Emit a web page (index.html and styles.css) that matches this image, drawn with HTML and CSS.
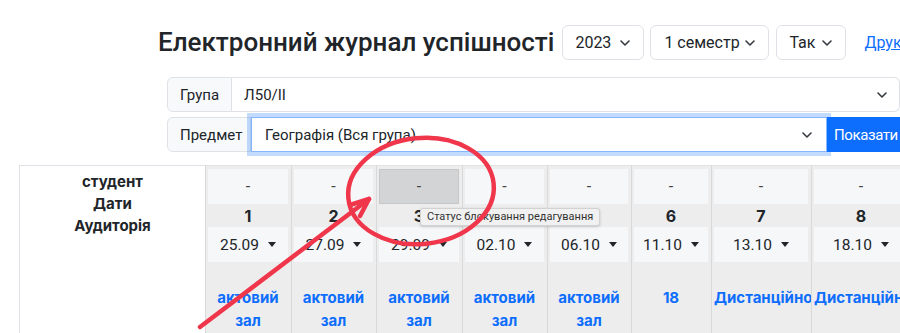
FILE: index.html
```html
<!DOCTYPE html>
<html lang="uk">
<head>
<meta charset="utf-8">
<title>Електронний журнал успішності</title>
<link rel="stylesheet" href="styles.css">
</head>
<body>
<div class="page">
  <header class="topbar">
    <h1 class="title">Електронний журнал успішності</h1>
    <div class="select sel-year"><span>2023</span><svg class="chev" viewBox="0 0 10 6"><path d="M1 1l4 4 4-4"/></svg></div>
    <div class="select sel-sem"><span>1 семестр</span><svg class="chev" viewBox="0 0 10 6"><path d="M1 1l4 4 4-4"/></svg></div>
    <div class="select sel-yes"><span>Так</span><svg class="chev" viewBox="0 0 10 6"><path d="M1 1l4 4 4-4"/></svg></div>
    <a class="print" href="#">Друк</a>
  </header>

  <section class="filters">
    <div class="igroup">
      <span class="ilabel">Група</span>
      <div class="iselect"><span>Л50/II</span><svg class="chev" viewBox="0 0 10 6"><path d="M1 1l4 4 4-4"/></svg></div>
    </div>
    <div class="igroup subject">
      <span class="ilabel">Предмет</span>
      <div class="iselect focus"><span>Географія (Вся група)</span><svg class="chev" viewBox="0 0 10 6"><path d="M1 1l4 4 4-4"/></svg></div>
      <button class="btn">Показати</button>
    </div>
  </section>

  <div class="journal">
    <div class="head-cell">
      <div>студент</div>
      <div>Дати</div>
      <div>Аудиторія</div>
    </div>
    <div class="lesson">
      <div class="status">-</div>
      <div class="num">1</div>
      <div class="date">25.09<span class="caret"></span></div>
      <a class="room" href="#">актовий зал</a>
    </div>
    <div class="lesson">
      <div class="status">-</div>
      <div class="num">2</div>
      <div class="date">27.09<span class="caret"></span></div>
      <a class="room" href="#">актовий зал</a>
    </div>
    <div class="lesson">
      <div class="status locked">-</div>
      <div class="num">3</div>
      <div class="date">29.09<span class="caret"></span></div>
      <a class="room" href="#">актовий зал</a>
    </div>
    <div class="lesson">
      <div class="status">-</div>
      <div class="num">4</div>
      <div class="date">02.10<span class="caret"></span></div>
      <a class="room" href="#">актовий зал</a>
    </div>
    <div class="lesson">
      <div class="status">-</div>
      <div class="num">5</div>
      <div class="date">06.10<span class="caret"></span></div>
      <a class="room" href="#">актовий зал</a>
    </div>
    <div class="lesson">
      <div class="status">-</div>
      <div class="num">6</div>
      <div class="date">11.10<span class="caret"></span></div>
      <a class="room" href="#">18</a>
    </div>
    <div class="lesson">
      <div class="status">-</div>
      <div class="num">7</div>
      <div class="date">13.10<span class="caret"></span></div>
      <a class="room" href="#">Дистанційно</a>
    </div>
    <div class="lesson">
      <div class="status">-</div>
      <div class="num">8</div>
      <div class="date">18.10<span class="caret"></span></div>
      <a class="room" href="#">Дистанційно</a>
    </div>
  </div>

  <div class="tip">Статус блокування редагування</div>

  <svg class="annot" viewBox="0 0 900 333" width="900" height="333">
    <ellipse cx="421" cy="191" rx="73" ry="53" transform="rotate(-6 421 191)"/>
    <path d="M200 327 L369 199"/>
    <path d="M350 205 L369 199 L360 216"/>
  </svg>
</div>
</body>
</html>
```

FILE: styles.css
```css
body {
  margin: 0;
  background: #ffffff;
}

.page {
  position: relative;
  width: 900px;
  height: 333px;
  overflow: hidden;
  font-family: Roboto, "Noto Sans", "Liberation Sans", sans-serif;
  color: #212529;
}

/* top bar */
.topbar {
  display: flex;
  align-items: center;
  height: 35px;
  padding: 25px 0 0 158px;
  white-space: nowrap;
}

.title {
  margin: 0 8px 0 0;
  font-size: 26px;
  font-weight: 500;
  line-height: 35px;
}

.select {
  box-sizing: border-box;
  height: 35px;
  display: flex;
  align-items: center;
  justify-content: space-between;
  border: 1px solid #dee2e6;
  border-radius: 6px;
  padding: 0 13px 0 12px;
  font-size: 16px;
  margin-right: 6px;
  flex: none;
}

.sel-year { width: 82px; }
.sel-sem { width: 119px; margin-right: 7px; padding-left: 13px; }
.sel-yes { width: 70px; margin-right: 18px; }

.chev {
  width: 10px;
  height: 6px;
  flex: none;
  fill: none;
  stroke: #343a40;
  stroke-width: 1.6;
  stroke-linecap: round;
  stroke-linejoin: round;
}

.print {
  color: #0d6efd;
  font-size: 16px;
  text-decoration: underline;
}

/* filters */
.filters {
  margin: 17px 0 0 167px;
  width: 733px;
  display: flex;
  flex-direction: column;
  gap: 5px;
}

.igroup {
  display: flex;
  height: 35px;
}

.ilabel {
  box-sizing: border-box;
  display: flex;
  align-items: center;
  padding: 0 12px;
  background: #f8f9fa;
  border: 1px solid #dee2e6;
  border-radius: 6px 0 0 6px;
  font-size: 15px;
  flex: none;
}

.iselect {
  box-sizing: border-box;
  flex: 1;
  display: flex;
  align-items: center;
  justify-content: space-between;
  padding: 0 12px 0 12px;
  border: 1px solid #dee2e6;
  border-left: 0;
  border-radius: 0 6px 6px 0;
  font-size: 15px;
  background: #fff;
}

.subject {
  width: 745px;
}

.subject .ilabel {
  width: 84px;
}

.iselect.focus {
  flex: none;
  width: 576px;
  border: 1px solid #86b7fe;
  border-radius: 0;
  padding-left: 13px;
  padding-right: 14px;
  box-shadow: 0 0 0 4px rgba(13, 110, 253, 0.25);
  position: relative;
  z-index: 1;
}

.btn {
  flex: none;
  width: 80px;
  border: 0;
  margin: 0;
  padding: 0 0 0 7px;
  background: #0d6efd;
  color: #fff;
  font-family: inherit;
  font-size: 15px;
  letter-spacing: -0.4px;
  text-align: left;
  white-space: nowrap;
}

/* journal table */
.journal {
  margin: 13px 0 0 19px;
  display: grid;
  grid-template-columns: 186px 86px 85px 86px 85px 84px 80px 100px 100px;
  height: 170px;
}

.head-cell {
  border-top: 1px solid #dee2e6;
  border-left: 1px solid #dee2e6;
  padding-top: 5px;
  text-align: center;
  font-family: Inter, Roboto, sans-serif;
  font-weight: 700;
  font-size: 15px;
  line-height: 22px;
}

.lesson {
  display: flex;
  flex-direction: column;
  background: #ededed;
  border-top: 1px solid #e2e2e2;
  border-left: 1px solid #d9d9d9;
  padding: 3px 3px 0 2px;
  text-align: center;
  min-width: 0;
}

.status {
  box-sizing: border-box;
  height: 35px;
  line-height: 35px;
  background: #f6f7f9;
  color: #444;
  font-size: 16px;
}

.status.locked {
  background: #d3d4d5;
  border: 1px solid #c6c7c8;
  line-height: 33px;
}

.num {
  height: 23px;
  line-height: 24px;
  font-family: Inter, Roboto, sans-serif;
  font-weight: 700;
  font-size: 16px;
}

.date {
  height: 35px;
  display: flex;
  align-items: center;
  justify-content: center;
  background: #f6f7f9;
  font-size: 15.5px;
}

.caret {
  width: 0;
  height: 0;
  margin-left: 9px;
  border-top: 5px solid #212529;
  border-left: 4px solid transparent;
  border-right: 4px solid transparent;
}

.room {
  margin-top: 24px;
  color: #0d6efd;
  font-family: Inter, Roboto, sans-serif;
  font-weight: 700;
  font-size: 15px;
  line-height: 23px;
  text-decoration: none;
  white-space: normal;
}

/* tooltip overlay */
.tip {
  position: absolute;
  left: 420px;
  top: 208px;
  box-sizing: border-box;
  height: 18px;
  padding: 0 6px;
  background: #f1f1f1;
  border: 1px solid #d2d2d2;
  border-radius: 3px;
  box-shadow: 0 1px 3px rgba(0, 0, 0, 0.18);
  font-size: 11px;
  line-height: 16px;
  color: #333;
  white-space: nowrap;
  z-index: 2;
}

/* red annotation overlay */
.annot {
  position: absolute;
  left: 0;
  top: 0;
  z-index: 3;
  pointer-events: none;
  fill: none;
  stroke: #f0364a;
  stroke-width: 4.5;
  stroke-linecap: round;
  stroke-linejoin: round;
}
```
